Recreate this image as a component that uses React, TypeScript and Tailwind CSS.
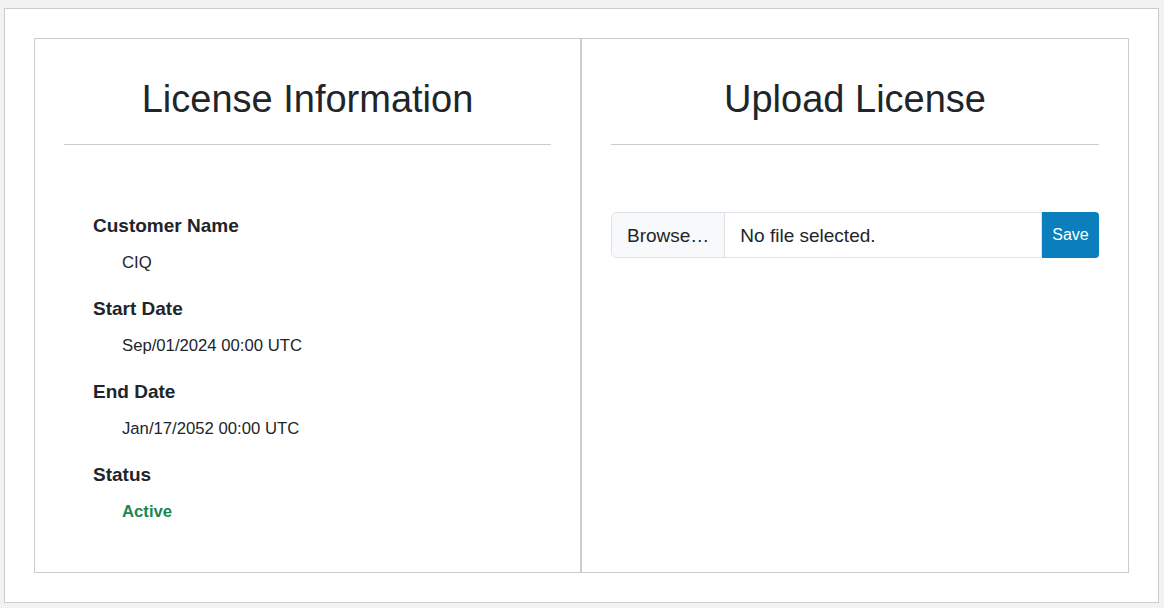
const items = [
  { label: "Customer Name", value: "CIQ" },
  { label: "Start Date", value: "Sep/01/2024 00:00 UTC" },
  { label: "End Date", value: "Jan/17/2052 00:00 UTC" },
]

const App = () => {
  return (
    <div className="h-[608px] w-full bg-[#f2f2f2] pl-[4px] pt-[8px] text-[#212529] font-['Liberation_Sans',Arial,sans-serif]">
      {/* outer card */}
      <div className="h-[595px] w-[1155px] border border-[#cccccc] bg-white p-[29px]">
        <div className="grid h-[535px] grid-cols-[547px_548px]">
          {/* license info */}
          <div className="border border-[#cccccc] px-[29px] pt-[37px]">
            <h1 className="text-center text-[38px] leading-[46px] font-normal">License Information</h1>
            <div className="mt-[22px] h-px bg-[#cccccc]"></div>
            <dl className="pl-[29px] pt-[69px]">
              {items.map((it) => (
                <div key={it.label} className="mb-[22px]">
                  <dt className="text-[19px] leading-[24px] font-bold">{it.label}</dt>
                  <dd className="mt-[13px] pl-[29px] text-[16.7px] leading-[24px]">{it.value}</dd>
                </div>
              ))}
              <div>
                <dt className="text-[19px] leading-[24px] font-bold">Status</dt>
                <dd className="mt-[13px] pl-[29px] text-[16.7px] leading-[24px] font-bold text-[#198754]">Active</dd>
              </div>
            </dl>
          </div>

          {/* upload */}
          <div className="border border-[#cccccc] px-[29px] pt-[37px]">
            <h1 className="text-center text-[38px] leading-[46px] font-normal">Upload License</h1>
            <div className="mt-[22px] h-px bg-[#cccccc]"></div>
            <div className="mt-[67px] flex h-[46px]">
              <div className="flex flex-1 items-center rounded-l-[6px] border border-[#dee2e6] text-[19px]">
                <span className="flex h-full items-center rounded-l-[6px] border-r border-[#dee2e6] bg-[#f8f9fa] px-[15px] pt-[2px]">Browse…</span>
                <span className="px-[15px] pt-[2px]">No file selected.</span>
              </div>
              <button className="w-[57px] rounded-r-[4px] bg-[#0b7fbd] text-[16px] text-white">Save</button>
            </div>
          </div>
        </div>
      </div>
    </div>
  )
}

export default App
